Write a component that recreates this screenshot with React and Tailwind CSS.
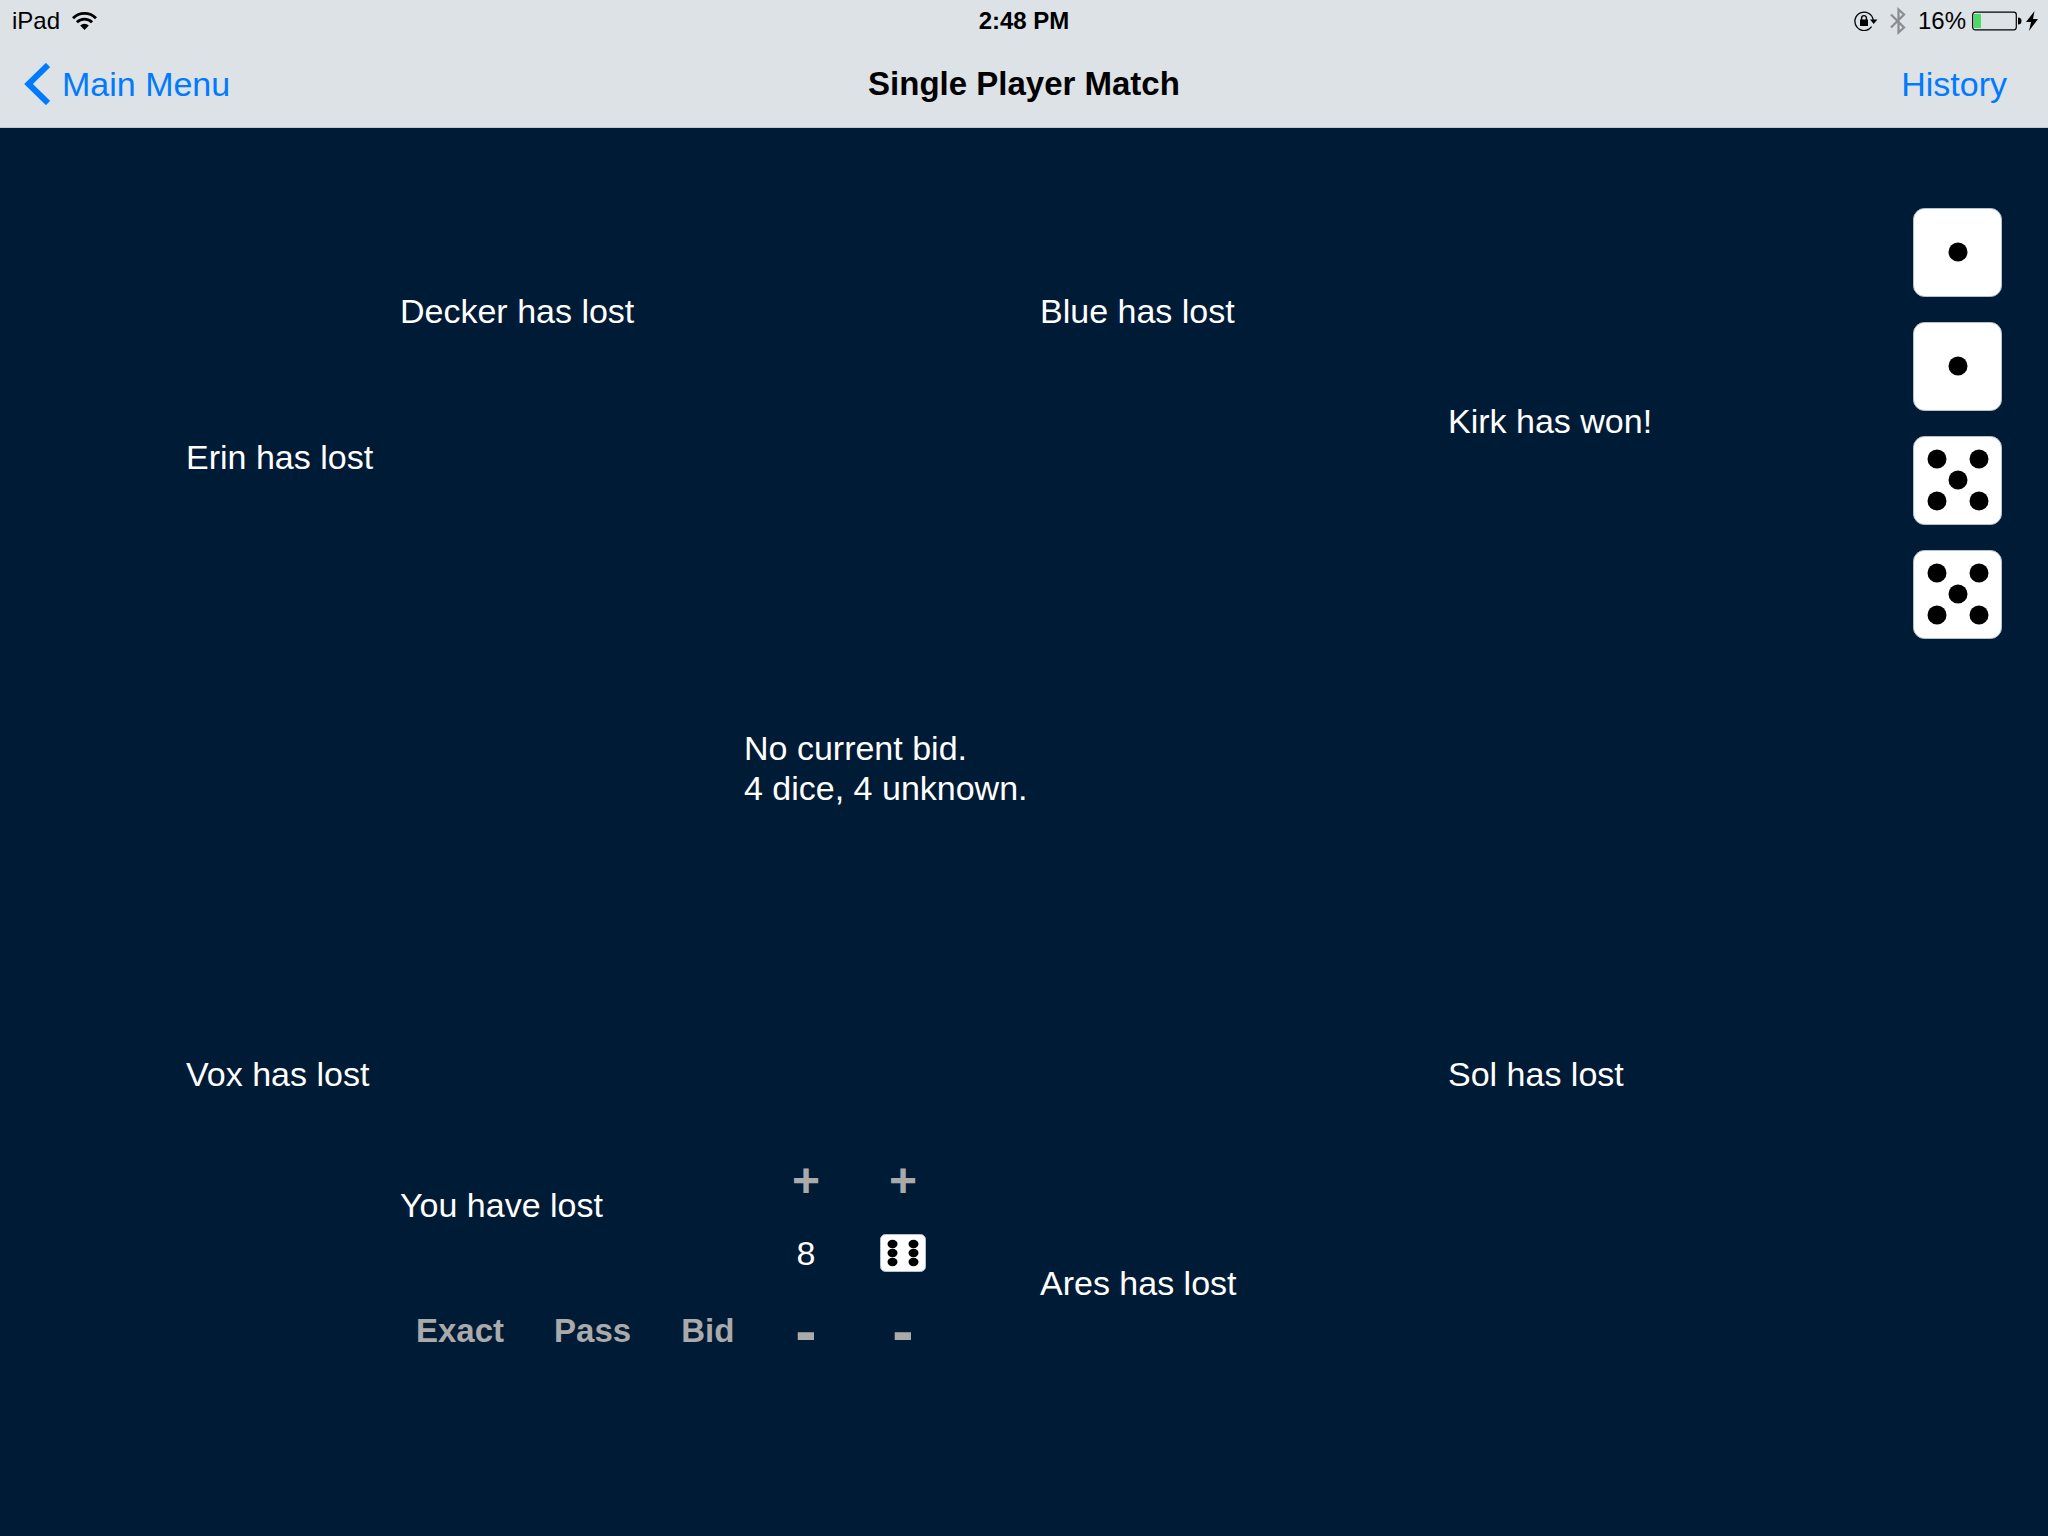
const PIPS = {
  1: [[45, 44]],
  5: [[24, 23], [66, 23], [45, 44], [24, 65], [66, 65]],
};

function Die({ value }) {
  return (
    <svg className="size-[89px]" viewBox="0 0 89 89" role="img" aria-label={`Die showing ${value}`}>
      <rect x=".5" y=".5" width="88" height="88" rx="11" fill="#fff" stroke="#b8c0ca" />
      {PIPS[value].map(([x, y]) => (
        <circle key={`${x}-${y}`} cx={x} cy={y} r="9.500" fill="#000" />
      ))}
    </svg>
  );
}

function SixDie() {
  return (
    <svg className="h-[38px] w-[46px]" viewBox="0 0 46 38" role="img" aria-label="Face 6">
      <rect x=".5" y=".5" width="45" height="37" rx="5" fill="#fff" stroke="#b8c0ca" />
      {[12.5, 33.5].map((x) =>
        [10, 19, 28].map((y) => <ellipse key={`${x}-${y}`} cx={x} cy={y} rx="5" ry="4.200" fill="#000" />)
      )}
    </svg>
  );
}

function Wifi() {
  return (
    <svg className="h-[18px] w-[25px]" viewBox="0 0 25 18" aria-hidden="true">
      <g fill="none" stroke="#000" strokeWidth="2.800">
        <path d="M1 6.200A16.300 16.300 0 0 1 24 6.200" />
        <path d="M4.900 10.200A10.700 10.700 0 0 1 20.100 10.200" />
      </g>
      <path d="M12.500 18L8.200 13.600A6.200 6.200 0 0 1 16.800 13.600Z" />
    </svg>
  );
}

function RotationLock() {
  return (
    <svg className="h-[20px] w-[24px]" viewBox="0 0 24 20" aria-hidden="true">
      <path d="M17.600 15.700A9.200 9.200 0 1 1 19.200 9" fill="none" stroke="#000" strokeWidth="1.300" />
      <path d="M16 8.500H23.400L19.700 13Z" />
      <rect x="6" y="8.500" width="8" height="6.500" />
      <path d="M7.600 9V7A2.400 2.400 0 0 1 12.400 7V9" fill="none" stroke="#000" strokeWidth="1.400" />
    </svg>
  );
}

function Bluetooth() {
  return (
    <svg className="h-[28px] w-[16px]" viewBox="0 0 16 28" aria-hidden="true">
      <path d="M1 7.500L14 20.500L8.500 25.500V2.500L14 7.500L1 20.500" fill="none" stroke="#8a8d90" strokeWidth="2.200" />
    </svg>
  );
}

function Battery() {
  return (
    <svg className="h-[20px] w-[50px]" viewBox="0 0 50 20" aria-hidden="true">
      <rect x=".7" y="1.200" width="43.600" height="17.600" rx="2.500" fill="none" stroke="#000" strokeWidth="1.200" />
      <rect x="2" y="3" width="7" height="14" fill="#4cd964" />
      <path d="M46 6.500A3.500 3.500 0 0 1 46 13.500Z" />
    </svg>
  );
}

function Bolt() {
  return (
    <svg className="h-[20px] w-[12px]" viewBox="0 0 12 20" aria-hidden="true">
      <path d="M8.500 0L0 11H5L3 20L12 8H7Z" />
    </svg>
  );
}

const actionClass = "text-[33px] font-bold leading-10 text-[#aaaaaa]";
const plusClass = "text-[48px] font-bold leading-10 text-[#aaaaaa]";
const minusClass = "mt-1.5 text-[64px] font-bold leading-10 text-[#aaaaaa]";

export default function App() {
  return (
    <div className="flex min-h-screen flex-col bg-[#001b36] font-['Liberation_Sans',Arial,sans-serif] text-[34px] leading-10 text-white">
      <header className="border-b border-[#c3c8cd] bg-[#dde2e6] text-black">
        <div className="grid h-[42px] grid-cols-3 items-center text-2xl">
          <div className="flex items-center gap-3 pl-3">
            <span>iPad</span>
            <Wifi />
          </div>
          <time className="text-center font-bold">2:48 PM</time>
          <div className="flex items-center justify-end pr-2.5">
            <RotationLock />
            <span className="ml-3"><Bluetooth /></span>
            <span className="ml-3">16%</span>
            <span className="ml-1.5"><Battery /></span>
            <span className="ml-1"><Bolt /></span>
          </div>
        </div>
        <nav className="grid h-[85px] grid-cols-3 items-start pt-[22px]">
          <button type="button" className="flex h-10 items-center gap-3 pl-6 text-[#007aff]">
            <svg className="h-[42px] w-[26px]" viewBox="0 0 26 42" aria-hidden="true">
              <path d="M24 2L4.500 21L24 40" fill="none" stroke="#007aff" strokeWidth="6" />
            </svg>
            Main Menu
          </button>
          <h1 className="text-center text-[33px] font-bold">Single Player Match</h1>
          <button type="button" className="justify-self-end pr-[41px] text-[#007aff]">History</button>
        </nav>
      </header>

      <main className="grid flex-1 grid-cols-[186fr_214fr_640fr_408fr_465fr_135fr] whitespace-nowrap">
        <section className="col-start-2">
          <p className="pt-[309px]">Erin has lost</p>
          <p className="pt-[577px]">Vox has lost</p>
        </section>

        <section>
          <p className="pt-[163px]">Decker has lost</p>
          <div className="pt-[397px] pl-[344px]">
            <p>No current bid.</p>
            <p>4 dice, 4 unknown.</p>
          </div>
          <div className="flex pt-[353px]">
            <div className="flex w-[381px] flex-col justify-between pt-6">
              <p>You have lost</p>
              <div className="flex gap-[50px] pl-4">
                <button type="button" className={actionClass}>Exact</button>
                <button type="button" className={actionClass}>Pass</button>
                <button type="button" className={actionClass}>Bid</button>
              </div>
            </div>
            <div className="flex w-[50px] flex-col items-center gap-8">
              <button type="button" aria-label="Raise count" className={plusClass}>+</button>
              <output>8</output>
              <button type="button" aria-label="Lower count" className={minusClass}>-</button>
            </div>
            <div className="ml-[47px] flex w-[50px] flex-col items-center gap-8">
              <button type="button" aria-label="Next face" className={plusClass}>+</button>
              <span className="flex h-10 items-center"><SixDie /></span>
              <button type="button" aria-label="Previous face" className={minusClass}>-</button>
            </div>
          </div>
        </section>

        <section>
          <p className="pt-[163px]">Blue has lost</p>
          <p className="pt-[932px]">Ares has lost</p>
        </section>

        <section>
          <p className="pt-[273px]">Kirk has won!</p>
          <p className="pt-[613px]">Sol has lost</p>
        </section>

        <section className="flex flex-col gap-[25px] pt-20">
          <Die value={1} />
          <Die value={1} />
          <Die value={5} />
          <Die value={5} />
        </section>
      </main>
    </div>
  );
}
